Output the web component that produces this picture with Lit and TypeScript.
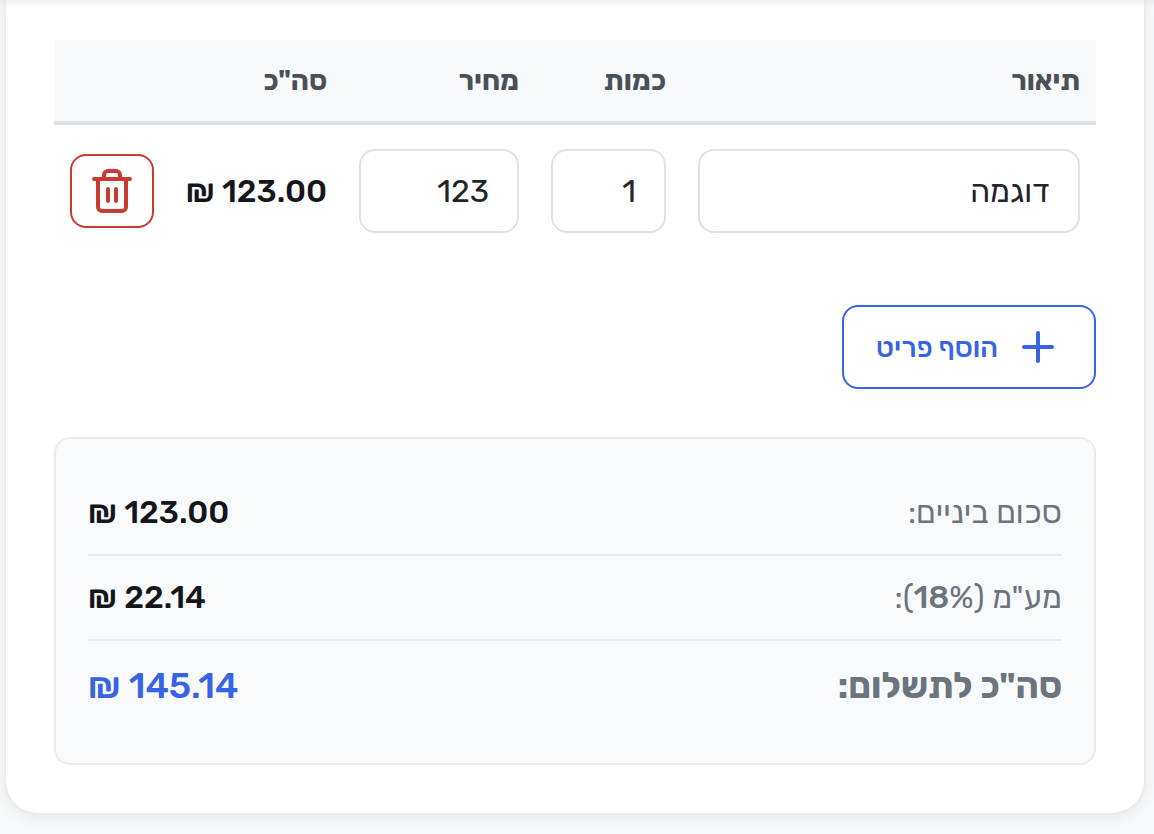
import { LitElement, html, css } from "lit";
import { customElement, state } from "lit/decorators.js";

interface Item {
  description: string;
  quantity: number;
  price: number;
}

const VAT_RATE = 18;
const money = (n: number) => `${n.toFixed(2)} ₪`;

@customElement("app-root")
export class AppRoot extends LitElement {
  static styles = css`
    :host {
      display: block;
      position: relative;
      box-sizing: border-box;
      min-height: 100vh;
      padding: 0 10px 20px 6px;
      overflow: hidden;
      background: #f8f9fa;
      color: #212529;
      font-family: "Rubik", "Open Sans", "Liberation Sans", sans-serif;
      font-size: 32px;
      line-height: 51px;
    }
    *, *::before, *::after { box-sizing: border-box; }
    .top-shade {
      position: absolute;
      top: 0;
      left: 0;
      right: 0;
      height: 8px;
      background: linear-gradient(rgba(0, 0, 0, 0.06), rgba(0, 0, 0, 0));
    }
    .card {
      padding: 40px 48px 48px;
      background: #fff;
      border-radius: 0 0 32px 32px;
      box-shadow: 0 4px 16px rgba(20, 25, 40, 0.08), 0 0 4px rgba(20, 25, 40, 0.06);
    }
    .items {
      width: 100%;
      table-layout: fixed;
      border-collapse: separate;
      border-spacing: 0;
    }
    .col-quantity { width: 147px; }
    .col-price { width: 192px; }
    .col-total { width: 173px; }
    .col-action { width: 116px; }
    th {
      padding: 18px 16px;
      border-bottom: 4px solid #dee2e6;
      background: #f8f9fa;
      color: #495057;
      font-size: 28px;
      font-weight: 700;
      line-height: 45px;
      text-align: start;
    }
    td {
      padding: 24px 16px;
      vertical-align: middle;
    }
    .field {
      display: block;
      width: 100%;
      height: 84px;
      padding: 0 28px;
      border: 2px solid #dee2e6;
      border-radius: 16px;
      background: #fff;
      color: #212529;
      font: inherit;
      text-align: start;
      appearance: textfield;
    }
    .field::-webkit-inner-spin-button { appearance: none; margin: 0; }
    .amount {
      color: #14161c;
      font-weight: 500;
      white-space: nowrap;
    }
    .button {
      display: inline-flex;
      align-items: center;
      justify-content: center;
      margin: 0;
      border: 2px solid;
      border-radius: 16px;
      background: #fff;
      font: inherit;
      cursor: pointer;
    }
    .remove {
      display: flex;
      width: 84px;
      height: 74px;
      padding: 0;
      border-color: #cb3a31;
      color: #cb3a31;
    }
    .add {
      height: 84px;
      margin-top: 48px;
      padding: 0 32px;
      gap: 16px;
      border-color: #3763e4;
      color: #3763e4;
      font-size: 28px;
      font-weight: 500;
    }
    .icon {
      flex: none;
      width: 48px;
      height: 48px;
      fill: none;
      stroke: currentColor;
      stroke-width: 4;
      stroke-linecap: round;
      stroke-linejoin: round;
    }
    .totals {
      margin: 48px 0 0;
      padding: 32px;
      border: 2px solid #e9ebee;
      border-radius: 16px;
      background: #f9fafc;
    }
    .line {
      display: flex;
      justify-content: space-between;
      padding: 16px 0;
      border-bottom: 2px solid #e9ebee;
    }
    .label {
      color: #6c757d;
    }
    .label strong { font-weight: 500; }
    .value { margin: 0; }
    .grand {
      border-bottom: 0;
      font-size: 36px;
      line-height: 58px;
    }
    .grand .label { font-weight: 700; }
    .grand .value { color: #3763e4; }
  `;

  @state() private items: Item[] = [{ description: "דוגמה", quantity: 1, price: 123 }];

  private change(index: number, patch: Partial<Item>) {
    this.items = this.items.map((it, i) => (i === index ? { ...it, ...patch } : it));
  }

  private add() {
    this.items = [...this.items, { description: "", quantity: 1, price: 0 }];
  }

  private drop(index: number) {
    this.items = this.items.filter((_, i) => i !== index);
  }

  private row(item: Item, i: number) {
    return html`
      <tr>
        <td>
          <input class="field" type="text" aria-labelledby="h-description" .value=${item.description}
            @input=${(e: Event) => this.change(i, { description: (e.target as HTMLInputElement).value })} />
        </td>
        <td>
          <input class="field" type="number" aria-labelledby="h-quantity" .value=${String(item.quantity)}
            @input=${(e: Event) => this.change(i, { quantity: Number((e.target as HTMLInputElement).value) })} />
        </td>
        <td>
          <input class="field" type="number" aria-labelledby="h-price" .value=${String(item.price)}
            @input=${(e: Event) => this.change(i, { price: Number((e.target as HTMLInputElement).value) })} />
        </td>
        <td class="amount">${money(item.quantity * item.price)}</td>
        <td>
          <button class="button remove" type="button" aria-label="מחק" @click=${() => this.drop(i)}>
            <svg class="icon" viewBox="0 0 48 48" aria-hidden="true">
              <path d="M6 12H42M10 12V40a4 4 0 0 0 4 4H34a4 4 0 0 0 4-4V12M16 12V8a4 4 0 0 1 4-4H28a4 4 0 0 1 4 4v4M20 22V34M28 22V34" />
            </svg>
          </button>
        </td>
      </tr>
    `;
  }

  render() {
    const subtotal = this.items.reduce((sum, it) => sum + it.quantity * it.price, 0);
    const vat = (subtotal * VAT_RATE) / 100;
    return html`
      <main class="card" dir="rtl" lang="he">
        <table class="items">
          <colgroup>
            <col />
            <col class="col-quantity" />
            <col class="col-price" />
            <col class="col-total" />
            <col class="col-action" />
          </colgroup>
          <thead>
            <tr>
              <th id="h-description" scope="col">תיאור</th>
              <th id="h-quantity" scope="col">כמות</th>
              <th id="h-price" scope="col">מחיר</th>
              <th scope="col">סה"כ</th>
              <th></th>
            </tr>
          </thead>
          <tbody>${this.items.map((item, i) => this.row(item, i))}</tbody>
        </table>
        <button class="button add" type="button" @click=${this.add}>
          <svg class="icon" viewBox="0 0 48 48" aria-hidden="true"><path d="M24 10V38M10 24H38" /></svg>
          <span>הוסף פריט</span>
        </button>
        <dl class="totals">
          <div class="line">
            <dt class="label">סכום ביניים:</dt>
            <dd class="value amount">${money(subtotal)}</dd>
          </div>
          <div class="line">
            <dt class="label">מע"מ (<strong>${VAT_RATE}</strong><span>%</span>):</dt>
            <dd class="value amount">${money(vat)}</dd>
          </div>
          <div class="line grand">
            <dt class="label">סה"כ לתשלום:</dt>
            <dd class="value amount">${money(subtotal + vat)}</dd>
          </div>
        </dl>
      </main>
      <div class="top-shade"></div>
    `;
  }
}
